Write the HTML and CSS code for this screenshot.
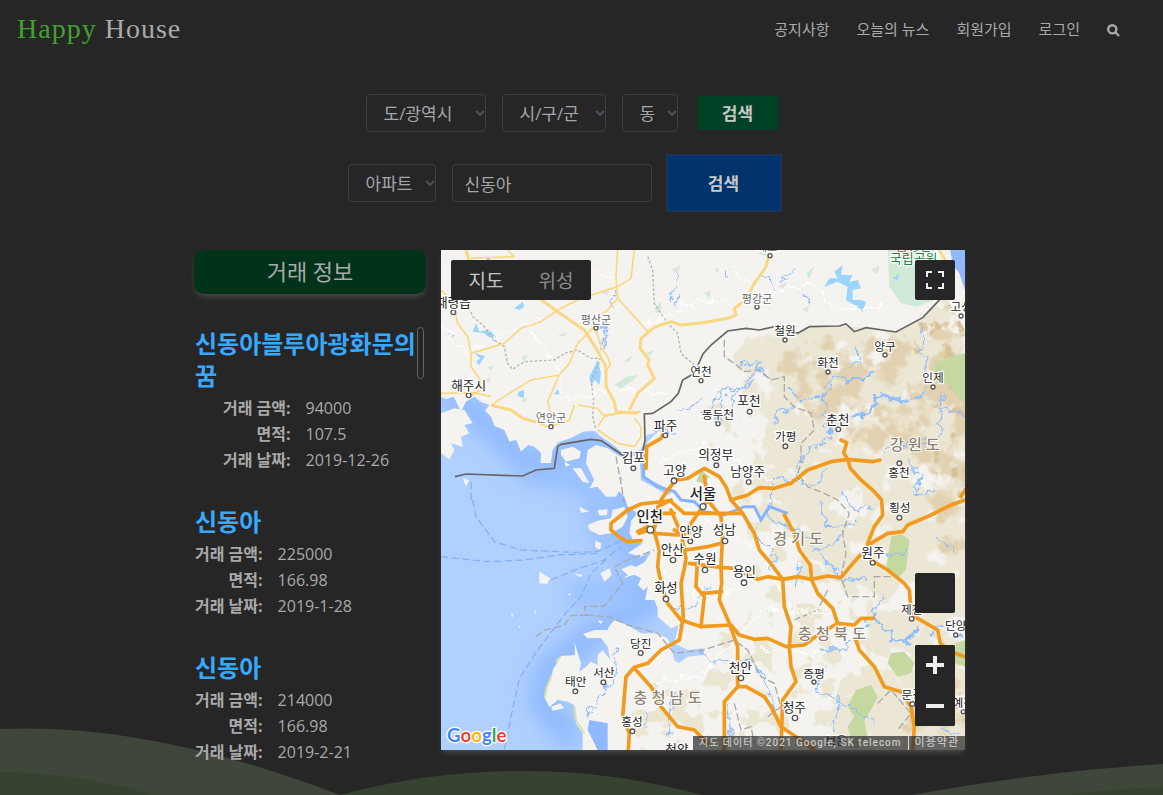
FILE: index.html
```html
<!DOCTYPE html>
<html lang="ko">
<head>
<meta charset="utf-8">
<meta name="viewport" content="width=device-width, initial-scale=1">
<title>Happy House</title>
<link rel="stylesheet" href="styles.css">
</head>
<body>
<svg class="waves" viewBox="0 0 1163 67" preserveAspectRatio="none" aria-hidden="true">
  <path fill="#3f473b" d="M0 1Q150-6 340 67H0ZM912 67Q1045 43 1163 36V67Z"/>
  <path fill="#364330" d="M0 44Q80 45 155 67H0ZM340 67Q430 43 520 43Q610 42 702 67ZM1060 67Q1110 61 1163 59V67Z"/>
</svg>

<header class="header">
  <a class="logo" href="#"><span class="logo-accent">Happy</span> House</a>
  <nav class="nav">
    <a href="#">공지사항</a>
    <a href="#">오늘의 뉴스</a>
    <a href="#">회원가입</a>
    <a href="#">로그인</a>
    <button class="nav-search" type="button" aria-label="검색">
      <svg viewBox="0 0 13 13" width="13" height="13"><circle cx="5.3" cy="5.3" r="4.1"/><path d="M8.4 8.4L12 12"/></svg>
    </button>
  </nav>
</header>

<main>
  <form class="search-row region-search">
    <span class="select-box region-city"><select aria-label="도/광역시"><option>도/광역시</option></select><svg viewBox="0 0 10 6"><path d="M1 1L5 5L9 1"/></svg></span>
    <span class="select-box region-district"><select aria-label="시/구/군"><option>시/구/군</option></select><svg viewBox="0 0 10 6"><path d="M1 1L5 5L9 1"/></svg></span>
    <span class="select-box region-dong"><select aria-label="동"><option>동</option></select><svg viewBox="0 0 10 6"><path d="M1 1L5 5L9 1"/></svg></span>
    <button class="btn btn-green" type="button">검색</button>
  </form>
  <form class="search-row name-search">
    <span class="select-box name-type"><select aria-label="검색 조건"><option>아파트</option></select><svg viewBox="0 0 10 6"><path d="M1 1L5 5L9 1"/></svg></span>
    <input class="name-input" type="text" aria-label="검색어" value="신동아">
    <button class="btn btn-blue" type="button">검색</button>
  </form>

  <div class="content">
    <section class="deals">
      <h2 class="deals-title">거래 정보</h2>
      <div class="deal-list">
        <span class="scroll-thumb"></span>
        <article class="deal">
          <h3>신동아블루아광화문의꿈</h3>
          <dl><dt>거래 금액:</dt><dd>94000</dd><dt>면적:</dt><dd>107.5</dd><dt>거래 날짜:</dt><dd>2019-12-26</dd></dl>
        </article>
        <article class="deal">
          <h3>신동아</h3>
          <dl><dt>거래 금액:</dt><dd>225000</dd><dt>면적:</dt><dd>166.98</dd><dt>거래 날짜:</dt><dd>2019-1-28</dd></dl>
        </article>
        <article class="deal">
          <h3>신동아</h3>
          <dl><dt>거래 금액:</dt><dd>214000</dd><dt>면적:</dt><dd>166.98</dd><dt>거래 날짜:</dt><dd>2019-2-21</dd></dl>
        </article>
      </div>
    </section>

    <section class="map" aria-label="지도">
      <svg class="map-canvas" viewBox="0 0 1572 1500" preserveAspectRatio="xMidYMid slice">
        <defs>
          <path id="sea" d="M0 440L15 448L38 440L60 485L75 455L100 440L118 455L145 465L132 482L150 500L160 528L190 540L205 575L225 570L240 605L262 585L280 590L300 610L298 640L330 640L335 600L350 578L395 562L425 545L462 543L480 560L510 580L548 612L600 598L618 555L650 545L620 575L608 605L608 680L660 705L690 730L680 735L600 690L595 615L550 622L528 615L528 650L545 690L520 710L550 740L560 770L590 790L570 812L565 850L580 878L605 880L560 910L600 920L630 905L612 935L585 950L570 945L540 958L560 975L545 985L580 975L600 985L590 1005L608 1022L620 1010L612 1050L640 1050L650 1075L650 1100L690 1135L715 1125L720 1108L740 1108L712 1130L700 1180L740 1200L786 1195L786 1215L740 1220L712 1240L700 1230L690 1190L680 1165L645 1150L600 1150L560 1125L520 1110L503 1130L500 1140L460 1140L425 1152L440 1165L480 1165L500 1190L508 1230L485 1200L470 1215L470 1245L450 1235L435 1250L415 1265L420 1240L400 1175L402 1215L360 1217L335 1260L330 1290L315 1310L310 1340L325 1372L350 1350L380 1355L400 1365L405 1420L425 1450L425 1500H0Z"/>
          <clipPath id="seaClip"><use href="#sea"/></clipPath>
          <clipPath id="southClip"><path d="M500 1500V1100H700V600L690 455L725 390L786 312L860 243L955 240L1010 228L1070 250L1105 230L1195 228L1275 233L1365 246L1445 203L1500 145L1520 150L1572 240V1500Z"/></clipPath>
          <filter id="soft" x="-20%" y="-20%" width="140%" height="140%"><feGaussianBlur stdDeviation="32"/></filter>
          <filter id="sand" x="0" y="0" width="1572" height="1500" filterUnits="userSpaceOnUse" color-interpolation-filters="sRGB">
            <feTurbulence type="fractalNoise" baseFrequency="0.011" numOctaves="3" seed="8"/>
            <feColorMatrix values="0 0 0 0 0 0 0 0 0 0 0 0 0 0 0 1 0 0 0 0" result="n"/>
            <feGaussianBlur in="SourceAlpha" stdDeviation="35" result="m"/>
            <feComposite in="n" in2="m" operator="arithmetic" k2="0.5" k3="0.5"/>
            <feComponentTransfer result="t"><feFuncA type="linear" slope="30" intercept="-20.5"/></feComponentTransfer>
            <feFlood flood-color="#ece7d5"/><feComposite in2="t" operator="in"/>
          </filter>
          <filter id="patches" x="0" y="0" width="1572" height="1500" filterUnits="userSpaceOnUse" color-interpolation-filters="sRGB">
            <feTurbulence type="fractalNoise" baseFrequency="0.016" numOctaves="3" seed="12"/>
            <feColorMatrix values="0 0 0 0 0 0 0 0 0 0 0 0 0 0 0 1 0 0 0 0" result="n"/>
            <feGaussianBlur in="SourceAlpha" stdDeviation="30" result="m"/>
            <feComposite in="n" in2="m" operator="arithmetic" k2="0.5" k3="0.5"/>
            <feComponentTransfer result="t"><feFuncA type="linear" slope="30" intercept="-23.1"/></feComponentTransfer>
            <feFlood flood-color="#ebe6d2"/><feComposite in2="t" operator="in"/>
          </filter>
          <filter id="hills" x="0" y="0" width="1572" height="1500" filterUnits="userSpaceOnUse" color-interpolation-filters="sRGB">
            <feTurbulence type="fractalNoise" baseFrequency="0.015" numOctaves="4" seed="21"/>
            <feColorMatrix values="0 0 0 0 0 0 0 0 0 0 0 0 0 0 0 1 0 0 0 0" result="n"/>
            <feGaussianBlur in="SourceAlpha" stdDeviation="40" result="m"/>
            <feComposite in="n" in2="m" operator="arithmetic" k2="0.5" k3="0.5"/>
            <feComponentTransfer result="t"><feFuncA type="linear" slope="12" intercept="-8.6"/></feComponentTransfer>
            <feFlood flood-color="#e1d1b0"/><feComposite in2="t" operator="in"/>
          </filter>
          <filter id="peaks" x="0" y="0" width="1572" height="1500" filterUnits="userSpaceOnUse" color-interpolation-filters="sRGB">
            <feTurbulence type="fractalNoise" baseFrequency="0.02" numOctaves="4" seed="33"/>
            <feColorMatrix values="0 0 0 0 0 0 0 0 0 0 0 0 0 0 0 1 0 0 0 0" result="n"/>
            <feGaussianBlur in="SourceAlpha" stdDeviation="40" result="m"/>
            <feComposite in="n" in2="m" operator="arithmetic" k2="0.5" k3="0.5"/>
            <feComponentTransfer result="t"><feFuncA type="linear" slope="14" intercept="-11"/></feComponentTransfer>
            <feFlood flood-color="#d6bf94"/><feComposite in2="t" operator="in"/>
          </filter>
          <filter id="rough" x="0" y="0" width="1572" height="1500" filterUnits="userSpaceOnUse">
            <feTurbulence type="fractalNoise" baseFrequency="0.035" numOctaves="3" seed="4"/>
            <feDisplacementMap in="SourceGraphic" scale="42" xChannelSelector="R" yChannelSelector="G"/>
          </filter>
        </defs>
        <rect width="1572" height="1500" fill="#f4f3f0"/>

        <!-- terrain -->
        <g clip-path="url(#southClip)">
          <path filter="url(#patches)" d="M760 420H1300V1100L1572 1100V1600H540V1280L700 1260L880 1060L860 760L780 640Z"/>
          <path filter="url(#sand)" d="M860 300L900 180L1400 150L1500 50L1650 50V1600H1180L1130 1440L1150 1280L1280 1230L1230 1030L1080 960L950 850L880 680L930 560L850 420Z"/>
          <path filter="url(#hills)" d="M960 230L1500 200L1490 100L1650 100V1000L1490 960L1430 780L1330 640L1150 600L1000 480ZM1440 1150L1650 1230V1500H1280L1400 1300Z"/>
          <path filter="url(#peaks)" d="M980 340L1080 330L1120 500L1020 480ZM1340 200L1500 120L1650 80V850L1480 800L1420 600L1460 400L1330 300ZM1450 1200L1650 1260V1500H1400Z"/>
        </g>
        <g fill="#c5d8a0">
          <path d="M1480 340L1520 322L1572 310V460L1540 430L1530 405L1480 400ZM1350 860L1380 852L1405 870L1395 960L1370 985L1335 960ZM1350 1210L1390 1205L1420 1240L1410 1270L1370 1280L1340 1240ZM1245 1320L1290 1305L1310 1340L1290 1380L1270 1410L1280 1470L1240 1500L1220 1430L1240 1400L1220 1370ZM1545 1180L1572 1170V1250L1540 1240ZM780 660L805 680L790 700L765 695Z"/>
        </g>
        <path fill="#ceead6" d="M1340 0H1480V150L1430 170L1380 160L1345 110Z"/>
        <g fill="#d0ebd7">
          <path d="M520 405L555 380L592 375L570 395L540 415ZM548 335L575 315L565 335ZM610 310L645 300L620 320ZM640 175L660 155L662 180L648 190ZM950 10L980 0L975 20ZM1095 70L1120 50L1105 85ZM790 130L810 120L805 145ZM140 352L160 345L150 362ZM240 320L260 315L250 335Z"/>
        </g>
        <g fill="#e4e2dc"><path d="M400 60l30 -12l-8 14ZM350 255l30 -8l-12 14ZM130 390l20 -10l-5 18ZM480 130l25 -15l-5 20ZM690 60l30 -15l-10 25ZM820 60l14 -10l-4 20ZM1010 110l28 -15l-8 20ZM1080 180l25 -12l-5 18ZM1290 60l25 -15l-4 28ZM240 450l20 -8l-6 18Z"/></g>

        <!-- sea -->
        <use href="#sea" fill="#b0d0ff"/>
        <g clip-path="url(#seaClip)">
          <path filter="url(#soft)" fill="none" stroke="#8fb9ff" stroke-width="80" d="M10 430L130 510L230 610L320 650L430 590L540 660L560 850L620 1060L500 1120L400 1200L330 1250L300 1350L400 1480"/>
          <path filter="url(#soft)" fill="none" stroke="#97bfff" stroke-width="70" d="M230 650L450 700L500 900M380 1040L620 1000"/>
        </g>
        <path fill="#8fb8ff" d="M1528 0H1572V120L1555 70L1535 45ZM445 1410L500 1420V1500H470L440 1440Z"/>
        <g fill="#f4f3f0">
          <path d="M0 490L40 475L70 480L95 520L70 525L85 550L60 560L65 590L30 580L40 600L25 628L0 610ZM440 600L465 585L500 595L545 625L535 660L545 700L525 740L495 740L470 710L445 715L460 690L435 640ZM360 600L395 590L420 605L415 625L375 635L360 615ZM65 685L85 690L75 710ZM395 655L420 655L445 700L425 695ZM370 635L388 645L375 650Z"/>
          <path d="M440 825L470 812L510 805L515 780L550 770L560 800L545 830L510 850L475 855L445 840ZM415 770L445 785L420 788ZM470 780L500 778L498 795L475 797ZM463 872L480 880L478 900L463 892ZM478 970L505 955L512 975L490 995ZM295 965L328 985L318 1002L295 1000ZM397 970L425 975L418 982ZM380 1033L390 1030L387 1038ZM210 1093L218 1090L214 1103ZM279 1087L285 1080L283 1094ZM232 1125L238 1132L234 1135ZM470 1110L486 1115L478 1122ZM330 1370L358 1360L370 1375L335 1382Z"/>
        </g>
        <path fill="none" stroke="#d5e5a9" stroke-width="6" d="M345 1235L357 1222M332 1275L318 1310L311 1345M400 1370L405 1410L430 1450"/>

        <!-- rivers and lakes -->
        <g filter="url(#rough)" fill="none" stroke="#8fbbff" stroke-width="4">
          <path d="M900 345L960 330L930 380L900 410L830 430L800 500M950 350L990 390M935 390L870 440L865 500M1045 420L1080 450L1150 430L1180 380L1210 390M1150 430L1150 520L1180 560L1100 600L1060 690L1000 680M1240 290L1260 340L1230 350M1440 220L1445 300L1460 380L1440 440L1400 460M1510 430L1490 500L1500 560L1420 590L1380 570M1320 610L1350 580L1420 590M1500 470L1572 500M1000 530L1010 490L1060 470M840 440L830 520M1000 680L990 740L980 810M1060 690L1130 700L1160 650"/>
          <path d="M980 810L1080 840L1120 900L1160 930L1200 990L1280 990M1120 900L1180 890L1200 850M1330 920L1400 900M1400 620L1440 680L1410 740L1480 720M1140 760L1160 830L1240 820M1460 1160L1500 1120L1560 1160M1300 1100L1340 1140L1370 1180M1280 1120L1200 1200L1140 1200M1340 1030L1300 1080L1310 1120M1160 1230L1120 1320L1200 1350L1300 1420M1200 1350L1180 1440M1480 1350L1500 1440L1560 1450M700 1330L680 1400L690 1460M620 1390L610 1430M780 1210L840 1240L920 1230M920 1230L980 1290L1000 1380M860 1360L870 1480M690 1080L760 1070L800 1010M930 820L940 860L1000 900L990 960M520 1200L530 1280L500 1310M1080 940L1060 1010M500 1300L440 1400M1200 730L1240 780L1290 770M1480 860L1540 900"/>
          <path stroke-width="10" d="M1210 390L1260 385L1300 370M1230 500L1290 490L1310 440L1360 450L1410 450M1160 550L1180 530M1345 1180L1400 1165L1440 1130M1380 1165L1410 1190"/>
          <path d="M820 460L790 490M700 480L760 460L790 450M640 540L700 550M710 60L690 150M720 130L700 170M480 220L500 260L480 300M520 120L515 180M1020 90L1060 60M1000 120L970 70M1090 140L1110 160M140 20L150 60M860 80L850 60"/>
        </g>
        <path fill="none" stroke="#86b3fc" stroke-width="9" d="M607 610L608 680L650 710L700 725L720 750L760 755L790 785L850 795L910 770L940 770L960 810L985 770L1040 790"/>
        <g fill="#9ad4ff">
          <path d="M1150 110L1165 85L1190 85L1180 65L1205 45L1200 75L1235 75L1225 95L1250 90L1260 115L1235 120L1235 150L1260 150L1275 155L1265 185L1240 165L1215 150L1220 110L1190 95ZM95 245L105 220L115 245L140 240L150 250L140 235L165 260L160 275L130 250ZM100 310L132 318L115 345L105 335L118 325ZM220 175L245 155L250 170L235 180ZM445 380L470 330L480 370L475 405L462 390L450 405ZM232 425L250 420L248 445L230 438ZM340 432L350 418L358 435ZM20 250L42 255L35 262ZM1355 85L1375 70L1370 90Z"/>
        </g>

        <!-- administrative borders and ferry lines -->
        <g fill="none" stroke="#b3b3b3" stroke-width="4" stroke-dasharray="8 6">
          <path d="M80 160L95 200L130 230L160 270L190 290L200 340L215 358L250 335L340 330L370 310L410 300L450 325L478 325L470 350L450 390L458 450L455 500L465 540M620 20L635 60L640 160L680 220L710 250L720 310L760 345"/>
        </g>
        <g fill="none" stroke="#a9a9a9" stroke-width="4" stroke-dasharray="22 9">
          <path d="M850 270L850 320L880 340L910 365L950 360L990 390L1030 380L1030 440L1060 470L1110 490L1120 540L1080 580L1080 640L1070 670L1100 710L1150 730L1190 750L1225 790L1205 850L1215 910L1200 980L1220 1040L1300 1040L1300 980L1360 980M1160 1020L1130 1080L1060 1110M525 620L540 700L550 760M285 1160L310 1140L370 1125L390 1097L435 1095L430 1070L490 1068L545 1000L520 950L560 930L640 900M435 1095L510 1102L560 1125L650 1150L700 1210L786 1200L880 1170L920 1200L960 1280L1000 1300L1020 1370L980 1400M880 1360L900 1440L930 1430L940 1480M1310 1360L1350 1320L1410 1390L1370 1440"/>
        </g>
        <path fill="none" stroke="#86b0fa" stroke-width="4" stroke-dasharray="22 10" d="M95 750L105 800L160 875L240 900L400 907L470 905L545 870M0 920L140 935L250 930L350 915L470 910M330 990L400 960L490 930L540 890M495 930L450 970L420 1040L370 1095L290 1200L235 1285L210 1400L190 1500M90 750V690"/>

        <!-- white minor roads -->
        <path filter="url(#rough)" fill="none" stroke="#fff" stroke-width="4" d="M0 230L80 310L150 270L300 200M80 20L200 60L380 40L520 80M600 230L780 150L900 160M880 60L960 130L1120 100L1180 180L1340 170M270 240L360 380L360 450L500 420L680 430M620 740L780 800L960 900L1060 1100M620 1300L780 1280L960 1080L1180 1090M640 950L790 1060L900 1010M960 1200L1140 1210M650 640L800 580L1000 700"/>

        <!-- northern roads -->
        <g fill="none" stroke="#f9d884" stroke-width="5" stroke-linejoin="round">
          <path d="M0 120L35 155L50 220L80 260L90 310L90 350L118 390L118 420L85 440M90 310L140 295L190 280L240 235L300 215L350 180L410 150L480 125L530 110L570 85L580 0M530 0L525 80L530 145L500 180L470 200M530 145L580 200L620 245M150 466L205 430L270 390L355 375L385 340L410 280L460 230M355 375L320 455L330 500L340 525M0 430L100 428L150 440M465 240L480 290L500 320L508 345L490 370M400 465L385 510L340 525L315 530L290 515M410 465L470 475L485 495L520 492L600 485M470 530L490 500L530 490M470 540L530 580L580 590L600 560L600 530L580 505M90 25L220 20L200 0"/>
          <path stroke-width="9" d="M75 0L90 50L110 100M295 145L350 185L430 240L465 295L495 350L495 410L520 455L525 485L590 490M150 466L210 480L245 505L300 520M565 480L590 430L640 385L620 345L625 330L597 295L600 265L640 232L690 215L720 225L786 218L860 205L885 195L880 175L915 150L940 100L975 50L985 10"/>
          <path stroke-width="8" d="M1490 130L1530 90L1515 35L1495 0"/>
        </g>

        <!-- expressways -->
        <g fill="none" stroke="#f09a1e" stroke-width="11" stroke-linejoin="round" stroke-linecap="round">
          <path d="M870 750L905 790L940 850L955 900L985 935L1025 988L1030 1070L1050 1130L1045 1190L1050 1250L1065 1295L1025 1350L1020 1500M745 940L840 952L880 955L950 988L980 980L1025 988L1070 980L1110 988L1160 978L1200 983L1240 935L1290 880L1340 850L1385 845L1400 825L1470 795L1530 765L1572 750M1030 795L1060 850L1075 900L1108 945L1112 990L1130 1030L1175 1075L1190 1120L1240 1125L1260 1105L1297 1105"/>
          <path d="M1200 570L1217 578L1208 608L1220 628L1228 655L1255 685L1300 725L1322 750L1325 795L1300 830L1280 880L1290 930L1340 960L1390 1000L1405 1020L1410 1080L1430 1105L1490 1140L1498 1180L1530 1205L1572 1220M1317 630L1295 635L1220 628L1170 635L1100 660L1050 700L1000 715L955 713L920 735L870 750L855 710L835 680L790 655L740 685L705 690L680 720L660 750M615 655L617 590L660 565L665 555M1560 740L1572 720"/>
          <path d="M690 752L600 762L560 780L510 820L510 840L540 865L560 875L600 872M590 845L620 830L640 850L710 855L745 850M595 850L640 835L650 800L650 770L690 750M640 845L655 900L650 950L665 1020L680 1060L720 1110L780 1130L870 1125L895 1155L940 1168L980 1165L1035 1190L1090 1185L1130 1155L1190 1120"/>
          <path d="M790 680L800 750L840 800L845 850L840 950L842 1000L835 1050L865 1120L890 1190L890 1310L915 1310L970 1340L990 1370L1020 1430L1080 1470L1120 1500M890 1310L850 1355L850 1500M690 780L720 850L735 925L730 955L720 1000L727 1100L715 1170L660 1200L620 1240L580 1252L555 1280L545 1400L565 1450L562 1500M580 1255L630 1310L660 1370L710 1430L760 1440L800 1480M770 920L765 1010L790 1040L780 1130M786 1030L842 1025M735 900L800 890L840 880M690 755L730 790L870 790L905 790M660 790L700 790M700 840L740 860L750 820L800 750M620 840L640 830M1245 1170L1255 1200L1300 1250L1330 1310L1380 1325L1410 1370L1420 1430L1415 1500"/>
        </g>
        <path fill="none" stroke="#656565" stroke-width="5" d="M42 680L75 672L245 678L285 660L340 655L350 590L360 583L450 568L480 572L545 615L605 605L612 570L610 492L635 490L690 455L712 430L725 390L760 370L786 312L810 285L860 243L915 235L955 240L1010 228L1070 250L1105 230L1195 228L1215 222L1240 245L1275 233L1365 246L1445 203L1500 145"/>

        <!-- place markers -->
        <g class="marker">
          <circle cx="37" cy="187" r="7"/><circle cx="83" cy="436" r="7"/><circle cx="465" cy="234" r="6"/><circle cx="330" cy="530" r="6"/><circle cx="673" cy="556" r="7"/><circle cx="577" cy="655" r="7"/><circle cx="699" cy="692" r="8"/><circle cx="780" cy="392" r="6"/>
          <circle cx="987" cy="17" r="6"/><circle cx="948" cy="171" r="6"/><circle cx="1032" cy="270" r="6"/><circle cx="1161" cy="366" r="6"/><circle cx="1332" cy="315" r="6"/><circle cx="1476" cy="411" r="6"/><circle cx="926" cy="485" r="7"/><circle cx="831" cy="521" r="6"/><circle cx="1192" cy="538" r="7"/><circle cx="1033" cy="589" r="7"/><circle cx="826" cy="646" r="7"/><circle cx="923" cy="696" r="7"/><circle cx="1375" cy="640" r="7"/><circle cx="1560" cy="198" r="6"/>
          <circle cx="786" cy="770" r="9"/><circle cx="628" cy="839" r="10"/><circle cx="748" cy="874" r="7"/><circle cx="852" cy="873" r="8"/><circle cx="696" cy="930" r="8"/><circle cx="792" cy="960" r="8"/><circle cx="909" cy="998" r="8"/><circle cx="675" cy="1047" r="8"/><circle cx="599" cy="1209" r="7"/><circle cx="403" cy="1324" r="7"/><circle cx="487" cy="1297" r="7"/><circle cx="574" cy="1444" r="7"/><circle cx="900" cy="1284" r="8"/><circle cx="1119" cy="1296" r="6"/><circle cx="1062" cy="1404" r="8"/><circle cx="1295" cy="938" r="7"/><circle cx="1375" cy="803" r="7"/><circle cx="1412" cy="1106" r="7"/><circle cx="1544" cy="1155" r="6"/><circle cx="1414" cy="1362" r="7"/><circle cx="1567" cy="1385" r="6"/>
        </g>
        <g class="place">
          <g class="county"><text x="465" y="221">평산군</text><text x="330" y="515">연안군</text><text x="948" y="158">평강군</text><text x="978" y="4">세포</text></g>
          <text x="37" y="171">재령읍</text><text x="83" y="421">해주시</text><text x="674" y="539">파주</text><text x="577" y="636">김포</text><text x="701" y="675">고양</text><text class="small" x="780" y="378">연천</text>
          <text class="small" x="1032" y="255">철원</text><text class="small" x="1161" y="351">화천</text><text class="small" x="1332" y="303">양구</text><text class="small" x="1476" y="397">인제</text><text x="924" y="465">포천</text><text class="small" x="831" y="507">동두천</text><text x="1190" y="523">춘천</text><text class="small" x="1034" y="574">가평</text><text x="824" y="628">의정부</text><text x="920" y="678">남양주</text><text class="small" x="1374" y="681">홍천</text><text class="small" x="1561" y="184">고성</text>
          <text x="750" y="858">안양</text><text x="850" y="853">성남</text><text x="694" y="911">안산</text><text x="792" y="940">수원</text><text x="910" y="978">용인</text><text x="675" y="1027">화성</text><text class="small" x="599" y="1194">당진</text><text class="small" x="404" y="1309">태안</text><text class="small" x="488" y="1282">서산</text><text class="small" x="573" y="1429">홍성</text><text x="898" y="1266">천안</text><text class="small" x="1119" y="1285">증평</text><text x="1060" y="1386">청주</text><text x="1296" y="921">원주</text><text class="small" x="1376" y="787">횡성</text><text class="small" x="1412" y="1093">제천</text><text class="small" x="1544" y="1140">단양</text><text class="small" x="1414" y="1348">문경</text><text class="small" x="1567" y="1370">예천</text><text class="small" x="1186" y="1485">보은</text><text x="708" y="1512">청양</text>
          <text class="city" x="786" y="748">서울</text><text class="city" x="626" y="815">인천</text>
        </g>
        <g class="park"><text x="1418" y="1">금강산</text><text x="1418" y="38">국립공원</text></g>
        <g class="province"><text x="1346" y="600">강원도</text><text x="996" y="882">경기도</text><text x="1070" y="1168">충청북도</text><text x="577" y="1359">충청남도</text></g>
        <text class="google" x="18" y="1477"><tspan fill="#4285f4">G</tspan><tspan fill="#ea4335">o</tspan><tspan fill="#fbbc05">o</tspan><tspan fill="#4285f4">g</tspan><tspan fill="#34a853">l</tspan><tspan fill="#ea4335">e</tspan></text>
      </svg>

      <div class="map-type">
        <button class="map-type-active" type="button">지도</button><button type="button">위성</button>
      </div>
      <button class="map-control fullscreen" type="button" aria-label="전체 화면">
        <svg viewBox="0 0 18 18" width="18" height="18"><path d="M0 0v6h2V2h4V0zM12 0v2h4v4h2V0zM16 12v4h-4v2h6v-6zM2 12H0v6h6v-2H2z"/></svg>
      </button>
      <div class="map-side">
        <button class="map-control" type="button" aria-label="스트리트 뷰"></button>
        <div class="zoom">
          <button class="map-control" type="button" aria-label="확대"><svg viewBox="0 0 18 18" width="18" height="18"><path d="M7 0h4v7h7v4h-7v7H7v-7H0V7h7z"/></svg></button>
          <button class="map-control" type="button" aria-label="축소"><svg viewBox="0 0 18 18" width="18" height="18"><path d="M0 7h18v4H0z"/></svg></button>
        </div>
      </div>
      <div class="map-legal"><span>지도 데이터 ©2021 Google, SK telecom</span><a href="#">이용약관</a></div>
    </section>
  </div>
</main>
</body>
</html>
```

FILE: styles.css
```css
* { box-sizing: border-box; }

body {
  position: relative;
  min-height: 100vh;
  margin: 0;
  background: #262626;
  color: #a9a9a9;
  font: 15px/26px "Open Sans", "Noto Sans CJK KR", sans-serif;
}

button, input, select { font-family: inherit; margin: 0; }
h2, h3, dl, dd { margin: 0; }
a { color: inherit; text-decoration: none; }

.waves {
  position: absolute;
  z-index: -1;
  left: 0;
  bottom: 0;
  width: 100%;
  height: 67px;
}

.header {
  display: flex;
  justify-content: space-between;
  align-items: center;
  height: 60px;
  padding: 0 43px 2px 17px;
}

.logo {
  font-family: "Liberation Serif", serif;
  font-size: 28px;
  letter-spacing: 1px;
}
.logo-accent { color: #43a02f; }

.nav { display: flex; align-items: center; gap: 27px; }

.nav-search {
  display: flex;
  padding: 2px 0 0;
  border: 0;
  background: none;
}
.nav-search svg { fill: none; stroke: #a9a9a9; stroke-width: 2.4; }

.search-row { display: flex; justify-content: center; align-items: center; gap: 16px; }
.region-search { padding: 34px 20px 0 0; }
.name-search { padding: 22px 34px 0 0; }

.select-box { position: relative; }
.select-box svg {
  position: absolute;
  right: 1px;
  top: 16px;
  width: 10px;
  height: 6px;
  fill: none;
  stroke: #4c535b;
  stroke-width: 2;
}
.region-city { width: 120px; }
.region-district { width: 104px; }
.region-dong { width: 56px; }
.name-type { width: 88px; }

select, .name-input {
  display: block;
  width: 100%;
  height: 38px;
  border: 1px solid #3a3f45;
  border-radius: 4px;
  background: transparent;
  color: #a3a7ab;
  font-size: 17px;
}
select { appearance: none; padding: 0 0 0 17px; }
.name-input { width: 200px; padding: 0 12px; }

.btn {
  padding: 0 0 2px;
  border: 0;
  color: #c8c8c8;
  font-size: 17px;
  font-weight: 700;
}
.btn-green { width: 80px; height: 34px; margin-left: 4px; background: #004225; }
.btn-blue { width: 116px; height: 58px; margin-left: -2px; border: 2px solid #1a3558; background: #00326c; }

.content {
  display: grid;
  grid-template-columns: 232px minmax(0, 1fr);
  gap: 15px;
  max-width: 775px;
  margin: 38px auto 0;
  padding-right: 4px;
}

.deals-title {
  padding-bottom: 2px;
  border-radius: 10px;
  background: #003319;
  box-shadow: 0 4px 6px -2px rgba(255, 255, 255, 0.2);
  font-size: 22px;
  font-weight: 400;
  line-height: 42px;
  text-align: center;
}

.deal-list {
  position: relative;
  display: flex;
  flex-direction: column;
  align-items: flex-start;
  gap: 33px;
  padding: 34px 9px 0 1px;
}

.scroll-thumb {
  position: absolute;
  right: 2px;
  top: 33px;
  width: 7px;
  height: 52px;
  border: 1px solid #666;
  border-radius: 4px;
}

.deal h3 {
  color: #36a9ff;
  font-size: 24px;
  font-weight: 700;
  line-height: 32px;
  word-break: break-all;
}
.deal dl {
  display: grid;
  grid-template-columns: auto auto;
  column-gap: 15px;
  width: fit-content;
  margin: 3px auto 0;
  font-size: 16px;
}
.deal dt { font-weight: 700; text-align: right; }

.map {
  position: relative;
  height: 500px;
  box-shadow: 0 4px 6px -2px rgba(255, 255, 255, 0.2);
}
.map-canvas { display: block; width: 100%; height: 100%; }
.map-canvas text {
  paint-order: stroke;
  stroke: #fff;
  stroke-width: 8px;
  stroke-linejoin: round;
  font-family: "Noto Sans CJK KR", sans-serif;
}
.marker circle { fill: #fff; stroke: #555; stroke-width: 4px; }
.place text { fill: #222; font-size: 38px; text-anchor: middle; }
.place .county text { fill: #666; font-size: 33px; }
.place .small { font-size: 35px; }
.place .city { font-size: 43px; font-weight: 500; }
.map-canvas .park text { fill: #188038; font-size: 39px; text-anchor: middle; }
.map-canvas .province text { fill: #8f8270; font-size: 46px; font-weight: 500; letter-spacing: 12px; stroke-width: 6px; }
.map-canvas .google { font-family: Lato, sans-serif; font-size: 56px; font-weight: 700; stroke-width: 8px; }

.map-type {
  position: absolute;
  left: 10px;
  top: 10px;
  display: flex;
  border-radius: 2px;
  background: #262626;
}
.map-type button {
  width: 70px;
  height: 40px;
  padding: 0;
  border: 0;
  background: none;
  color: #8d8d8d;
  font-size: 19px;
}
.map-type .map-type-active { color: #c4c4c4; }

.map-control {
  display: flex;
  justify-content: center;
  align-items: center;
  width: 40px;
  height: 40px;
  padding: 0;
  border: 0;
  border-radius: 2px;
  background: #262626;
  fill: #eee;
}
.fullscreen { position: absolute; right: 10px; top: 10px; }
.map-side {
  position: absolute;
  right: 10px;
  bottom: 24px;
  display: grid;
  gap: 32px;
}
.zoom { display: grid; gap: 1px; border-radius: 2px; background: #262626; }

.map-legal {
  position: absolute;
  right: 0;
  bottom: 0;
  display: flex;
  color: #c6c6c6;
  font: 500 10px/14px Roboto, "Noto Sans CJK KR", sans-serif;
  letter-spacing: 1px;
  white-space: nowrap;
}
.map-legal > * { padding: 0 6px; background: rgba(38, 38, 38, 0.7); }
.map-legal a { border-left: 1px solid #ddd; font-size: 11px; }
```
